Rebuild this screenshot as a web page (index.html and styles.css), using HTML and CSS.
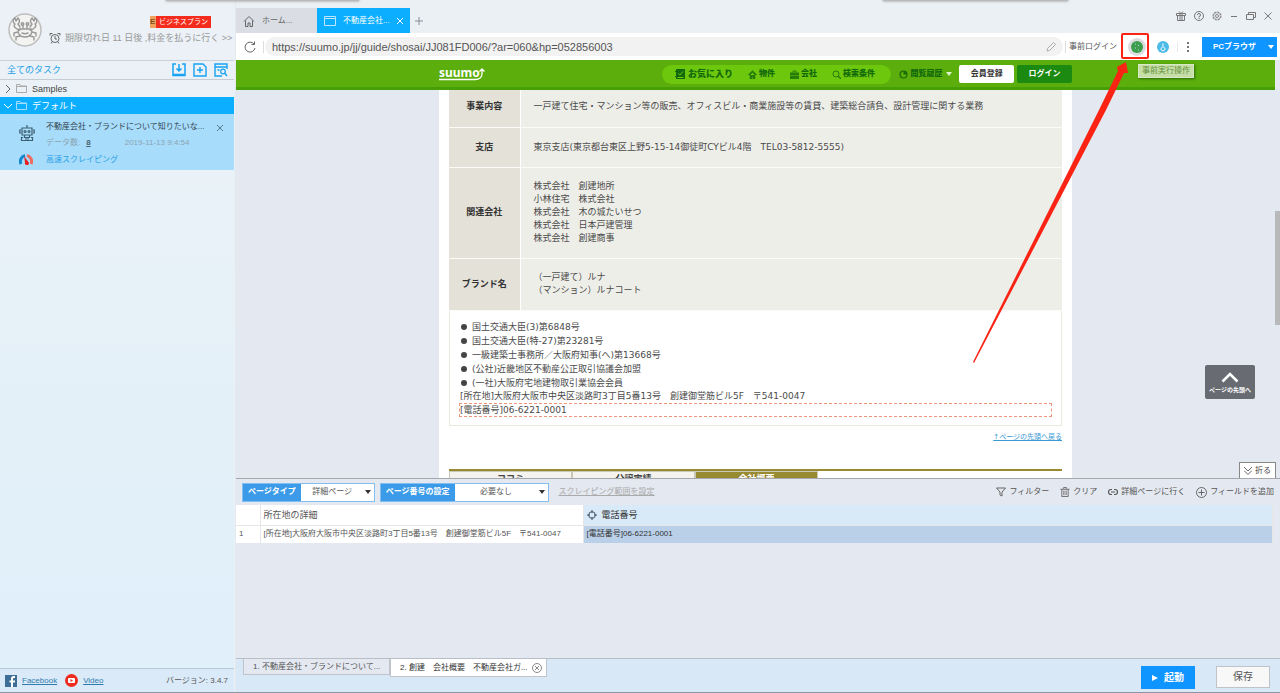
FILE: index.html
```html
<!DOCTYPE html>
<html lang="ja">
<head>
<meta charset="utf-8">
<title>不動産会社・ブランドについて</title>
<link rel="stylesheet" href="styles.css">
</head>
<body>
<div class="app">
  <aside class="sidebar">
    <header class="account">
      <svg class="avatar" viewBox="0 0 34 34"><circle cx="17" cy="17" r="16" fill="#f3f3f2" stroke="#bdbdbd" stroke-width="1.5"/><g fill="none" stroke="#999" stroke-width="1.4" stroke-linejoin="round" stroke-linecap="round"><path d="M12 17c-5-1-7-4-5-6-3-2-2-5 0-6l1 3 2-3c2 2 2 4 0 6l2 3M22 17c5-1 7-4 5-6 3-2 2-5 0-6l-1 3-2-3c-2 2-2 4 0 6l-2 3"/><path d="M11 16h12c2 3 0 8-6 8s-8-5-6-8zM15 15v-3M19 15v-3M14 20c2 1 4 1 6 0M10 19l-4 1v3M24 19l4 1v3M12 23l-4 1v3M22 23l4 1v3"/><circle cx="14.500" cy="11" r="1.300"/><circle cx="19.500" cy="11" r="1.300"/></g></svg>
      <div class="account-info">
        <div class="plan"><span class="plan-mark">E</span><span class="plan-name">ビジネスプラン</span></div>
        <div class="expiry"><svg class="ic12" viewBox="0 0 12 12"><g fill="none" stroke="#666"><circle cx="6" cy="6.5" r="4"/><path d="M6 4v3h2M1 3.500V1.500h2.500M11 3.500V1.500H8.500M3 10l-1 1.500M9 10l1 1.500"/></g></svg><a href="#">期限切れ日 11 日後 ,料金を払うに行く &gt;&gt;</a></div>
      </div>
    </header>
    <div class="tasks-head">
      <h2>全てのタスク</h2>
      <button aria-label="取り込み"><svg class="ic14" viewBox="0 0 14 14"><path d="M4 1H1v11.500h12V1h-3M7 1v7M4.500 5.500L7 8l2.500-2.500M1 11.500h12" fill="none" stroke="#17a2f3" stroke-width="1.500"/></svg></button>
      <button aria-label="新規"><svg class="ic14" viewBox="0 0 14 14"><path d="M1 1h9l3 3v9H1zM7 4v6M4 7h6" fill="none" stroke="#17a2f3" stroke-width="1.400"/></svg></button>
      <button aria-label="検索"><svg class="ic14" viewBox="0 0 14 14"><path d="M13 6V1H1v12h7M1 4h12M3.500 7h2" fill="none" stroke="#17a2f3" stroke-width="1.400"/><circle cx="9" cy="8.500" r="2.300" fill="none" stroke="#17a2f3" stroke-width="1.200"/><path d="M10.500 10l2.500 3" stroke="#17a2f3" stroke-width="1.400"/></svg></button>
    </div>
    <div class="folder"><svg class="ic8" viewBox="0 0 8 8"><path d="M2 0l4 4-4 4" fill="none" stroke="#666"/></svg><svg class="fold" viewBox="0 0 11 9"><path d="M.5 8.500v-8h3.500l1 1.500h5.500v6.500zM.5 2.500h10" fill="none" stroke="#aaa"/></svg><span>Samples</span></div>
    <div class="folder open"><svg class="ic8" viewBox="0 0 8 8"><path d="M0 2l4 4 4-4" fill="none" stroke="#fff"/></svg><svg class="fold" viewBox="0 0 11 9"><path d="M.5 8.500v-8h3.500l1 1.500h5.500v6.500zM.5 2.500h10" fill="none" stroke="#a5deff"/></svg><span>デフォルト</span></div>
    <div class="task">
      <div class="task-icons">
        <svg class="robot" viewBox="0 0 16 16"><g fill="none" stroke="#3e5f73" stroke-width="1.200"><path d="M8 0v3M3 3h10v7H3zM2 5H.8v3H2M14 5h1.200v3H14M5.500 10v2.500h5V10M4 12.500H2.500v3h11v-3H12M6 14h4"/><circle cx="6" cy="6.500" r="1"/><circle cx="10" cy="6.500" r="1"/></g></svg>
        <svg class="gauge" viewBox="0 0 14 12"><path d="M2 11a6 6 0 0 1 4-8.500" fill="none" stroke="#1488ce" stroke-width="3"/><path d="M8 2.500a6 6 0 0 1 4 8.500" fill="none" stroke="#ef6b60" stroke-width="3"/><path d="M5 3l4 5.500a2 2 0 1 1-3 1z" fill="#e51f20"/></svg>
      </div>
      <div class="task-body">
        <div class="task-title">不動産会社・ブランドについて知りたいな...</div>
        <div class="task-meta"><span>データ数:</span><b>8</b><time>2019-11-13 9:4:54</time></div>
        <a href="#">高速スクレイピング</a>
      </div>
      <button class="task-close" aria-label="閉じる"><svg class="ic6" viewBox="0 0 6 6"><path d="M0 0l6 6M6 0L0 6" stroke="#557b92"/></svg></button>
    </div>
    <footer class="side-foot">
      <svg class="ic12" viewBox="0 0 12 12"><path d="M0 0h12v12H0z" fill="#3e6d96"/><path d="M8 12V7.500h2V5.500H8V4q0-1 1-1h1V1H8.500Q6 1 6 3.500v2H4.500v2H6V12z" fill="#fff"/></svg>
      <a href="#">Facebook</a>
      <svg class="ic13" viewBox="0 0 13 13"><circle cx="6.500" cy="6.500" r="6.500" fill="#ee2b1f"/><rect x="3" y="4" width="7" height="5" rx="1" fill="#fff"/><path d="M5.500 5v3l2.500-1.500z" fill="#ee2b1f"/></svg>
      <a href="#">Video</a>
      <span class="version">バージョン: 3.4.7</span>
    </footer>
  </aside>

  <main class="main">
    <div class="titlebar">
      <div class="tabs">
        <button class="tab"><svg class="ic12" viewBox="0 0 12 12"><path d="M1 6.500L6 1.500l5 5M2.500 5.500v6h2.500V8h2v3.500h2.500v-6" fill="none" stroke="#666"/></svg>ホーム...</button>
        <button class="tab active"><svg class="ic12" viewBox="0 0 12 12"><path d="M.5 1.500h11v9H.5zM.5 3.500h11" fill="none" stroke="#bfe6ff"/></svg>不動産会社...<svg class="ic6 push" viewBox="0 0 6 6"><path d="M0 0l6 6M6 0L0 6" stroke="#fff"/></svg></button>
        <button class="add" aria-label="新しいタブ"><svg class="ic8" viewBox="0 0 8 8"><path d="M4 0v8M0 4h8" stroke="#8b8f94"/></svg></button>
      </div>
      <div class="win">
        <button aria-label="ギフト"><svg class="ic10" viewBox="0 0 10 10"><path d="M.5 2.500h9v2h-9zM1.500 4.500v5h7v-5M4 2.500v7M6 2.500v7M5 2.500L3 .5M5 2.500L7 .5" fill="none" stroke="#777"/></svg></button>
        <button aria-label="ヘルプ"><svg class="ic10" viewBox="0 0 10 10"><circle cx="5" cy="5" r="4.500" fill="none" stroke="#777"/><path d="M3.500 4a1.500 1.500 0 1 1 1.500 1.500v1M5 7v1" fill="none" stroke="#777"/></svg></button>
        <button aria-label="設定"><svg class="ic10" viewBox="0 0 10 10"><circle cx="5" cy="5" r="4" fill="none" stroke="#888" stroke-width="1.200" stroke-dasharray="2.200 .9"/><circle cx="5" cy="5" r="3.300" fill="none" stroke="#999" stroke-width=".6"/><circle cx="5" cy="5" r="1.500" fill="none" stroke="#888"/></svg></button>
        <button aria-label="最小化"><svg class="ic8" viewBox="0 0 8 8"><path d="M1 4.500h6" stroke="#777"/></svg></button>
        <button aria-label="最大化"><svg class="ic10" viewBox="0 0 10 10"><path d="M.5 3.500h7v5h-7zM2.500 3.500v-2h7v5h-2" fill="none" stroke="#777"/></svg></button>
        <button aria-label="閉じる"><svg class="ic8" viewBox="0 0 8 8"><path d="M.5.5l7 7M7.500.5l-7 7" stroke="#777"/></svg></button>
      </div>
    </div>

    <div class="urlbar">
      <button class="reload" aria-label="再読み込み"><svg class="ic12" viewBox="0 0 12 12"><path d="M10 3a5 5 0 1 0 1 4M10.500.5v3h-3" fill="none" stroke="#666"/></svg></button>
      <label class="address"><input type="text" aria-label="URL" value="https://suumo.jp/jj/guide/shosai/JJ081FD006/?ar=060&amp;hp=052856003"><svg class="ic10" viewBox="0 0 10 10"><path d="M1 9l.5-2.500L7.500.5l2 2L3.500 8.500z" fill="none" stroke="#aaa"/></svg></label>
      <button class="prelogin">事前ログイン</button>
      <button class="preaction" aria-label="事前実行操作"><svg viewBox="0 0 20 20"><circle cx="10" cy="10" r="9" fill="#dcdde0"/><circle cx="10" cy="10" r="6" fill="#3f9e4e"/><path d="M8 7h1M11 8.500h1M8 11h1M11 13h1" stroke="#9fe0dd"/></svg></button>
      <button class="touch" aria-label="操作"><svg class="ic12" viewBox="0 0 12 12"><circle cx="6" cy="6" r="6" fill="#4dbbe8"/><path d="M6 2.500V7M4.500 6.500a2 2 0 1 0 3 0" fill="none" stroke="#fff"/></svg></button>
      <button class="more" aria-label="メニュー"><svg class="ic10" viewBox="0 0 10 10"><path d="M4 0h2v2H4zM4 4h2v2H4zM4 8h2v2H4z" fill="#777"/></svg></button>
      <button class="pc">PCブラウザ<i class="caret"></i></button>
    </div>

    <section class="webview">
      <div class="site-head">
        <div class="site-row">
          <a class="logo" href="#">suumo<svg viewBox="0 0 48 14"><path d="M0 12.500h36q7 0 7-6V2M40.500 4.500L43 2l2.500 2.500" fill="none" stroke="#fff" stroke-width="1.300"/></svg></a>
          <nav class="pill">
            <a class="fav" href="#"><svg class="ic10" viewBox="0 0 10 10"><path d="M1 0h9v10H1zM0 2h1v1H0zM0 7h1v1H0z" fill="#126a0c"/><path d="M3.500 4.500L5 6l3-3.500M2.500 8.500h6" fill="none" stroke="#6cc70d"/></svg>お気に入り</a>
            <a href="#"><svg class="ic9" viewBox="0 0 9 9"><path d="M0 5l4.500-4.500L9 5M2 5v4h2V6.500h1V9h2V5L4.500 2.500z" fill="#267d08" stroke="#267d08" stroke-width=".6"/></svg>物件</a>
            <a href="#"><svg class="ic9" viewBox="0 0 9 9"><path d="M3 2.500V1h3v1.500" fill="none" stroke="#267d08"/><path d="M0 2.500h9V5H0zM0 5.500h9V9H0z" fill="#267d08"/></svg>会社</a>
            <a href="#"><svg class="ic9" viewBox="0 0 9 9"><circle cx="4" cy="4" r="3" fill="none" stroke="#267d08"/><path d="M6 6l3 3" stroke="#267d08" stroke-width="1.300"/></svg>検索条件</a>
          </nav>
          <a class="history" href="#"><svg class="ic9" viewBox="0 0 9 9"><circle cx="4.500" cy="4.500" r="3.500" fill="none" stroke="#196c08" stroke-width="1.200"/><path d="M4.500 4.500V1a3.500 3.500 0 0 1 3.500 3.500z" fill="#196c08"/></svg>閲覧履歴<i class="caret"></i></a>
          <button class="join">会員登録</button>
          <button class="login">ログイン</button>
        </div>
      </div>
      <div class="site-body">
        <article class="sheet">
          <table class="info">
            <tr><th>事業内容</th><td>一戸建て住宅・マンション等の販売、オフィスビル・商業施設等の賃貸、建築総合請負、設計管理に関する業務</td></tr>
            <tr><th>支店</th><td>東京支店(東京都台東区上野5-15-14御徒町CYビル4階　TEL03-5812-5555)</td></tr>
            <tr class="tall"><th>関連会社</th><td>株式会社　創建地所<br>小林住宅　株式会社<br>株式会社　木の城たいせつ<br>株式会社　日本戸建管理<br>株式会社　創建商事</td></tr>
            <tr class="mid"><th>ブランド名</th><td>（一戸建て）ルナ<br>（マンション）ルナコート</td></tr>
          </table>
          <div class="licence">
            <ul>
              <li>国土交通大臣(3)第6848号</li>
              <li>国土交通大臣(特-27)第23281号</li>
              <li>一級建築士事務所／大阪府知事(へ)第13668号</li>
              <li>(公社)近畿地区不動産公正取引協議会加盟</li>
              <li>(一社)大阪府宅地建物取引業協会会員</li>
            </ul>
            <p>[所在地]大阪府大阪市中央区淡路町3丁目5番13号　創建御堂筋ビル5F　〒541-0047</p>
            <p class="picked">[電話番号]06-6221-0001</p>
          </div>
          <a class="back" href="#">↑ページの先頭へ戻る</a>
          <nav class="site-tabs"><a href="#">ココミ</a><a href="#">分譲実績</a><a class="on" href="#">会社概要</a></nav>
        </article>
        <button class="to-top"><svg viewBox="0 0 18 11"><path d="M1.500 9.500L9 2l7.500 7.500" fill="none" stroke="#fff" stroke-width="2.600"/></svg>ページの先頭へ</button>
        <button class="fold-btn"><svg class="ic8" viewBox="0 0 8 8"><path d="M0 0l4 4 4-4M0 3.500l4 4 4-4" fill="none" stroke="#666"/></svg>折る</button>
        <div class="thumb"></div>
      </div>
    </section>

    <section class="data">
      <div class="tools">
        <label class="pick"><span>ページタイプ</span><span class="sel"><select class="w74"><option>詳細ページ</option></select><i class="caret"></i></span></label>
        <label class="pick"><span>ページ番号の設定</span><span class="sel"><select class="w94"><option>必要なし</option></select><i class="caret"></i></span></label>
        <a class="range" href="#">スクレイピング範囲を設定</a>
        <div class="actions">
          <button><svg class="ic10" viewBox="0 0 10 10"><path d="M.5 1h9L6 5v4L4 8V5z" fill="none" stroke="#666"/></svg>フィルター</button>
          <button><svg class="ic10" viewBox="0 0 10 11"><path d="M0 2.500h10M3.500 2V.5h3V2M1.500 2.500v8h7v-8" fill="none" stroke="#666"/><path d="M3.500 4v5M5 4v5M6.500 4v5" stroke="#888"/></svg>クリア</button>
          <button><svg class="ic10" viewBox="0 0 10 10"><path d="M4 7.500H3a2.500 2.500 0 0 1 0-5h1M6 2.500h1a2.500 2.500 0 0 1 0 5H6M3 5h4" fill="none" stroke="#555" stroke-width="1.200"/></svg>詳細ページに行く</button>
          <button><svg class="ic11" viewBox="0 0 11 11"><circle cx="5.500" cy="5.500" r="5" fill="none" stroke="#666"/><path d="M5.500 2.500v6M2.500 5.500h6" stroke="#666"/></svg>フィールドを追加</button>
        </div>
      </div>
      <table class="grid">
        <tr><th class="num"></th><th class="addr">所在地の詳細</th><th class="tel"><svg class="ic10" viewBox="0 0 10 10"><circle cx="5" cy="5" r="3.300" fill="none" stroke="#456"/><path d="M5 0v3M5 7v3M0 5h3M7 5h3" stroke="#456"/></svg>電話番号</th></tr>
        <tr><td>1</td><td>[所在地]大阪府大阪市中央区淡路町3丁目5番13号　創建御堂筋ビル5F　〒541-0047</td><td class="tel">[電話番号]06-6221-0001</td></tr>
      </table>
    </section>

    <footer class="foot">
      <div class="steps">
        <button>1. 不動産会社・ブランドについて...</button>
        <button class="on">2. 創建　会社概要　不動産会社ガ...<svg class="ic10" viewBox="0 0 10 10"><circle cx="5" cy="5" r="4.500" fill="none" stroke="#888"/><path d="M3 3l4 4M7 3L3 7" stroke="#888"/></svg></button>
      </div>
      <button class="run"><svg class="ic6" viewBox="0 0 6 6"><path d="M0 0l6 3-6 3z" fill="#fff"/></svg>起動</button>
      <button class="save">保存</button>
    </footer>
  </main>

  <div class="shade left"></div>
  <div class="shade right"></div>
  <div class="tip">事前実行操作</div>
  <svg class="pointer" viewBox="0 0 180 334"><rect x="149" y="4" width="26" height="24" rx="1" fill="none" stroke="#fb2414" stroke-width="2"/><path d="M0 332L126 80 145 41 144 37 153 32 155 43 151 43 133 80 1 333z" fill="#fb2414"/></svg>
</div>
</body>
</html>
```

FILE: styles.css
```css
* { box-sizing: border-box; }
body { margin: 0; font: 8px/12px "Liberation Sans", "Noto Sans CJK JP", sans-serif; color: #555; }
button { border: 0; padding: 0; background: none; font: inherit; color: inherit; display: flex; align-items: center; justify-content: center; }
svg { display: block; flex: none; }
h2, p, ul { margin: 0; padding: 0; }
.ic6 { width: 6px; height: 6px; }
.ic8 { width: 8px; height: 8px; }
.ic9 { width: 9px; height: 9px; }
.ic10 { width: 10px; height: 10px; }
.ic11 { width: 11px; height: 11px; }
.ic12 { width: 12px; height: 12px; }
.ic13 { width: 13px; height: 13px; }
.ic14 { width: 14px; height: 14px; }
.caret { border: 3px solid transparent; border-top: 4px solid currentColor; border-bottom: 0; }

.app { position: relative; display: flex; height: 100vh; overflow: hidden; background: #ebf0f5; border-bottom: 1px solid #8d97a8; }
.sidebar { width: 234px; flex: none; display: flex; flex-direction: column; background: linear-gradient(#ecf1f6 0, #e8f2f8 240px, #e0eff9 600px); }
.account { height: 61px; display: flex; gap: 7px; padding: 13px 0 0 8px; border-bottom: 1px solid #cbd1d8; }
.avatar { width: 34px; height: 34px; }
.account-info { flex: 1; }
.plan { display: flex; width: 61px; margin: 3px 0 0 101px; background: #f42c1e; color: #fff; line-height: 12px; }
.plan-mark { width: 6px; background: #efa35c; color: #80521c; font-weight: bold; }
.plan-name { font-size: 7px; flex: 1; text-align: center; }
.expiry { display: flex; gap: 4px; margin-top: 4px; white-space: nowrap; }
.expiry a { font-size: 9px; color: #999; text-decoration: none; }
.tasks-head { height: 19px; display: flex; align-items: center; gap: 7px; padding: 0 6px 0 7px; border-bottom: 1px solid #c6ccd4; }
.tasks-head h2 { flex: 1; font-size: 9px; font-weight: normal; color: #1d9fe8; }
.folder { height: 17px; display: flex; align-items: center; gap: 4px; padding: 0 4px; font-size: 9px; color: #444; }
.folder span { padding-left: 1px; }
.fold { width: 11px; height: 9px; }
.folder.open { background: #0caeff; color: #fff; }
.task { height: 56px; display: flex; padding: 7px 11px 0 19px; background: #a7dcfb; }
.task-icons { width: 27px; }
.robot { width: 16px; height: 16px; margin-top: 4px; }
.gauge { width: 14px; height: 12px; margin-top: 12px; }
.task-body { flex: 1; white-space: nowrap; }
.task-title { color: #34444f; }
.task-meta { display: flex; margin: 4px 0 5px; color: #8ba4b3; }
.task-meta b { margin-left: 6px; color: #4c6270; text-decoration: underline; }
.task-meta time { margin-left: 34px; }
.task a { color: #2ba1e6; text-decoration: none; }
.task-close { align-self: flex-start; margin-top: 4px; }
.side-foot { margin-top: auto; height: 24px; display: flex; align-items: center; gap: 5px; padding: 0 6px 0 5px; background: #dbeaf8; border-top: 1px solid #b9c8d5; }
.side-foot a { color: #2e7cae; margin-right: 3px; }
.version { margin-left: auto; }

.main { flex: 1; min-width: 0; display: flex; flex-direction: column; border-left: 1px solid #e3e9f0; margin-left: 1px; }
.titlebar { height: 33px; display: flex; justify-content: space-between; padding: 8px 8px 0 0; }
.tabs { display: flex; }
.tab { width: 81px; gap: 7px; padding: 0 7px; justify-content: flex-start; background: #dadee4; color: #666; white-space: nowrap; }
.tab.active { width: 93px; background: #0caeff; color: #fff; }
.push { margin-left: auto; }
.add { padding: 0 5px; }
.win { display: flex; gap: 8px; height: 16px; align-items: center; }

.urlbar { height: 27px; display: flex; align-items: center; background: #fff; }
.reload { width: 28px; height: 12px; border-right: 1px solid #ddd; }
.address { flex: 1; height: 19px; display: flex; align-items: center; margin-left: 1px; padding: 0 7px; border-radius: 10px; background: #f2f2f2; }
.address input { flex: 1; min-width: 0; border: 0; padding: 0; background: none; font: 11px/16px "Liberation Sans", sans-serif; color: #555; }
.prelogin { border-left: 1px solid #ddd; margin-left: 2px; padding: 0 10px 0 3px; }
.preaction { width: 20px; height: 20px; }
.preaction svg { width: 20px; height: 20px; }
.touch { margin-left: 10px; }
.more { margin: 0 9px 0 8px; padding-left: 5px; border-left: 1px solid #e8e8e8; }
.pc { width: 75px; height: 20px; gap: 12px; padding-left: 8px; margin-right: 3px; background: #0f95ff; color: #fff; font-weight: bold; }

.webview { flex: 1; min-height: 0; display: flex; flex-direction: column; background: #e4e8f0; color: #4a4a4a; }
.site-head { height: 30px; margin-right: 5px; background: #5bae0b; border-bottom: 3px solid #469f06; }
.site-row { max-width: 633px; height: 28px; margin: 0 auto; display: flex; align-items: center; }
.site-row a { color: #126a0c; text-decoration: none; font-weight: 900; }
.site-row .logo { position: relative; width: 48px; height: 14px; color: #fff; font: bold 12px/12px "Noto Sans", sans-serif; }
.logo svg { position: absolute; inset: 0; width: 48px; height: 14px; }
.pill { display: flex; align-items: center; gap: 15px; width: 230px; height: 19px; margin-left: 175px; padding-left: 13px; border-radius: 10px; background: #6cc70d; white-space: nowrap; }
.pill a, .history { display: flex; align-items: center; gap: 2px; }
.pill a.fav { font-size: 9px; gap: 3px; }
.history { margin-left: 8px; width: 60px; white-space: nowrap; }
.history .caret { margin-left: auto; margin-right: 7px; color: #dff4cf; }
.join, .login { width: 55px; height: 18px; border-radius: 2px; font-weight: bold; background: #fff; color: #333; }
.login { margin-left: 3px; background: #1c8910; color: #fff; }
.site-body { position: relative; flex: 1; min-height: 0; overflow: hidden; padding-right: 5px; }
.sheet { max-width: 633px; margin: 0 auto; padding: 0 10px; background: #fff; min-height: 100%; font: 9px/13px "DejaVu Sans", "Noto Sans CJK JP", sans-serif; }
.info { width: 100%; border-collapse: collapse; }
.info tr { height: 40px; border-bottom: 1px solid #fbfbf8; }
.info tr:first-child { height: 37px; }
.info tr.tall { height: 91px; }
.info tr.mid { height: 52px; }
.info th { width: 71px; padding: 0; background: #e3e1d8; color: #333; border-right: 1px solid #fff; }
.info td { padding: 0 13px; background: #eeeee9; }
.info tr:first-child > * { padding-bottom: 4px; }
.licence { border: 1px solid #e9e8df; border-top: 0; padding: 9px 9px 8px; }
.licence ul { list-style: none; }
.licence li { display: flex; align-items: center; gap: 5px; line-height: 14px; padding-left: 2px; }
.licence li::before { content: ""; width: 6px; height: 6px; border-radius: 50%; background: #444; }
.licence p { line-height: 13px; padding-left: 1px; }
.licence .picked { line-height: 12px; padding-left: 0; border: 1px dashed #f0927c; }
.back { display: block; margin-top: 5px; text-align: right; font-size: 7px; color: #3b9ad4; }
.site-tabs { display: flex; margin-top: 25px; border-top: 2px solid #988a31; }
.site-tabs a { width: 123px; text-align: center; line-height: 14px; font-weight: bold; color: #444; background: #f4f3ee; border: 1px solid #c9c7b8; text-decoration: none; }
.site-tabs a.on { background: #988a31; color: #fff; }
.to-top { position: absolute; right: 25px; bottom: 79px; width: 50px; height: 34px; padding-top: 3px; flex-direction: column; gap: 1px; border-radius: 2px; background: #686b72; color: #fff; font-size: 6px; font-weight: bold; }
.to-top svg { width: 18px; height: 11px; }
.fold-btn { position: absolute; right: 4px; bottom: 0; width: 37px; height: 16px; gap: 3px; border: 1px solid #888; border-bottom: 0; background: #fff; }
.thumb { position: absolute; right: 0; top: 121px; width: 5px; height: 114px; background: #b8b9bb; }

.data { height: 180px; border-top: 1px solid #a5a7ac; background: #e4e8f0; }
.tools { height: 26px; display: flex; align-items: center; gap: 5px; padding: 0 6px; white-space: nowrap; }
.pick { display: flex; height: 19px; border: 1px solid #82bff0; background: #3b9be8; color: #fff; font-weight: bold; align-items: center; }
.pick > span:first-child { padding: 0 5px; }
.sel { display: flex; align-items: center; height: 17px; background: #fff; color: #333; }
.sel .caret { margin-left: -9px; margin-right: 3px; pointer-events: none; }
.sel select { appearance: none; border: 0; background: #fff; height: 17px; font: inherit; font-weight: normal; color: #555; text-align: center; text-align-last: center; padding: 0 10px 0 0; }
.w74 { width: 73px; }
.w94 { width: 93px; }
.range { margin-left: 5px; color: #aaa; }
.actions { display: flex; gap: 11px; margin-left: auto; }
.actions button { gap: 3px; }
.grid { width: calc(100% - 7px); border-collapse: collapse; table-layout: fixed; background: #fff; }
.grid th, .grid td { padding: 0 3px; text-align: left; font-weight: normal; height: 18px; border-right: 1px solid #e6e6e6; white-space: nowrap; }
.grid th { height: 20px; font-size: 9px; border-bottom: 1px solid #e6e6e6; }
.grid .num { width: 24px; }
.grid .addr { width: 323px; }
.grid th.tel { background: #d8eaf8; color: #333; }
.grid td.tel { background: #bad0e9; color: #333; }
.grid th svg { display: inline-block; vertical-align: middle; margin-right: 5px; }

.foot { height: 34px; display: flex; align-items: flex-start; padding: 0 10px 0 7px; border-top: 1px solid #b8bec6; background: #d8e8f6; }
.steps { display: flex; align-items: flex-start; margin-right: auto; white-space: nowrap; }
.steps button { width: 147px; height: 16px; padding: 0 4px 0 9px; border: 1px solid #bfc3cb; border-top: 0; background: #e4e8f0; justify-content: flex-start; }
.steps button.on { width: 157px; height: 18px; background: #fff; color: #333; justify-content: space-between; }
.run { width: 54px; height: 23px; margin-top: 7px; gap: 6px; background: #0f95ff; color: #fff; font-size: 10px; font-weight: bold; }
.save { width: 54px; height: 22px; margin: 7px 0 0 21px; border: 1px solid #c0c4c8; background: #f8f8f8; font-size: 10px; }

.shade { position: absolute; top: -4px; height: 5px; background: #bbb; box-shadow: 0 0 3px #888; }
.shade.left { left: 166px; width: 193px; }
.shade.right { right: 212px; width: 185px; }
.tip { position: absolute; top: 64px; right: 86px; padding: 0 3px; background: #c5dfa6; color: #66903f; border: 1px solid #d9e8c8; box-shadow: 1px 1px 2px #2c6a08; }
.pointer { position: absolute; top: 30px; right: 127px; width: 180px; height: 334px; pointer-events: none; }
```
